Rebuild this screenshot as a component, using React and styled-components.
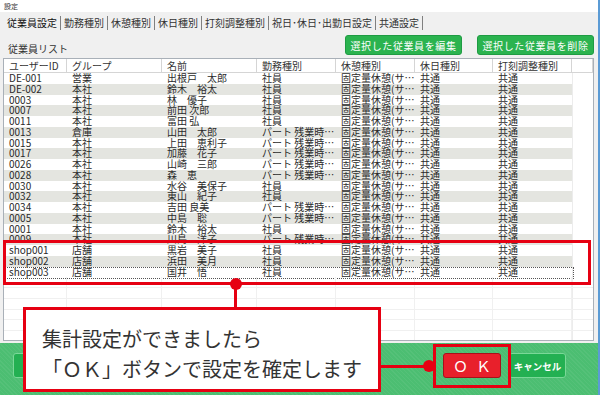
import styled, { createGlobalStyle } from "styled-components";

const GlobalStyle = createGlobalStyle`
  * { box-sizing: border-box; }
  body {
    margin: 0;
    font-family: "Noto Sans CJK JP", "Noto Sans", sans-serif;
    color: #222;
  }
`;

const RED = "#e60012";
const COLS = "63px 95px 95px 79px 79px 78px 79px 1fr";

const Window = styled.div`
  position: relative;
  width: 600px;
  height: 395px;
  display: flex;
  flex-direction: column;
  background: #f0f0f0;
  border-right: 2px solid #5b9bd5;
  overflow: hidden;
`;

const TitleBar = styled.div`
  height: 12px;
  background: #fff;
  padding-left: 4px;
  font-size: 7px;
  line-height: 12px;
  color: #333;
`;

const TabBar = styled.div`
  height: 19px;
  display: flex;
  align-items: center;
  padding-left: 4px;
`;

const Tab = styled.div`
  height: 14px;
  padding: 0 3px;
  margin-top: 3px;
  font-size: 10px;
  line-height: 13px;
  white-space: nowrap;
  border-right: 1px solid #808080;
  color: ${(p) => (p.$active ? "#111" : "#333")};
`;

const Body = styled.div`
  flex: 1;
  display: flex;
  flex-direction: column;
  padding: 0 4px 2px 3px;
  min-height: 0;
`;

const Toolbar = styled.div`
  height: 27px;
  display: flex;
  align-items: flex-end;
  padding: 0 0 3px 5px;
  gap: 15px;
`;

const ListLabel = styled.div`
  flex: 1;
  font-size: 10px;
  line-height: 12px;
  color: #333;
`;

const GreenButton = styled.button`
  height: 20px;
  width: 117px;
  padding: 0;
  border: 1px solid #1f9b43;
  border-radius: 3px;
  background: #2bb34f;
  color: #fff;
  font-family: inherit;
  font-size: 10px;
  letter-spacing: 0.6px;
`;

const Table = styled.div`
  flex: 1;
  display: flex;
  flex-direction: column;
  background: #fff;
  border: 1px solid #a9b0b8;
  overflow: hidden;
`;

const HeaderRow = styled.div`
  display: grid;
  grid-template-columns: ${COLS};
  height: 14px;
  flex-shrink: 0;
  border-bottom: 1px solid #d5d5d5;
`;

const HeaderCell = styled.div`
  padding-left: 5px;
  font-size: 10px;
  line-height: 13px;
  color: #333;
  border-right: 1px solid #d5d5d5;
  white-space: nowrap;
  overflow-x: clip;
`;

const Row = styled.div`
  position: relative;
  display: grid;
  grid-template-columns: ${COLS};
  height: 10.75px;
  flex-shrink: 0;
  ${(p) => p.$empty && "border-bottom: 1px solid #f0f0f0;"}
  ${(p) =>
    p.$focus &&
    `&::after {
      content: "";
      position: absolute;
      left: 0;
      top: 0;
      width: 568px;
      height: 100%;
      border: 1px dotted #555;
    }`}
`;

const Cell = styled.div`
  padding-left: 5px;
  font-size: 10px;
  line-height: 10.75px;
  white-space: nowrap;
  overflow-x: clip;
  color: #2a2a2a;
  background: ${(p) => (p.$alt ? "#e4e5e0" : "transparent")};
  ${(p) => p.$empty && "border-right: 1px solid #f0f0f0;"}
`;

const FillCell = styled.div`
  border-left: 1px solid #ececec;
`;

const Footer = styled.div`
  height: 52px;
  display: flex;
  align-items: flex-start;
  justify-content: space-between;
  padding: 10px 32px 0 13px;
  background: repeating-linear-gradient(
      45deg,
      rgba(255, 255, 255, 0.05) 0 1px,
      transparent 1px 3px
    ),
    #4cbe72;
`;

const FooterGroup = styled.div`
  display: flex;
  gap: 8px;
`;

const FooterButton = styled.button`
  height: 25px;
  width: ${(p) => p.$w}px;
  padding: 0;
  border-radius: 3px;
  font-family: inherit;
  color: #fff;
  border: 1px solid ${(p) => (p.$ok ? "#a8101a" : "#7ad898")};
  background: ${(p) => (p.$ok ? "#e8202b" : "#23b052")};
  font-size: ${(p) => (p.$ok ? "15px" : "9.5px")};
  font-weight: ${(p) => (p.$ok ? 400 : 700)};
  letter-spacing: ${(p) => (p.$ok ? "8px" : "0")};
  text-indent: ${(p) => (p.$ok ? "8px" : "0")};
`;

const Highlight = styled.div`
  position: absolute;
  left: ${(p) => p.$x}px;
  top: ${(p) => p.$y}px;
  width: ${(p) => p.$w}px;
  height: ${(p) => p.$h}px;
  border: 3px solid ${RED};
  pointer-events: none;
`;

const Dot = styled.div`
  position: absolute;
  left: ${(p) => p.$x - 6}px;
  top: ${(p) => p.$y - 6}px;
  width: 12px;
  height: 12px;
  border-radius: 50%;
  background: ${RED};
`;

const Line = styled.div`
  position: absolute;
  left: ${(p) => p.$x}px;
  top: ${(p) => p.$y}px;
  width: ${(p) => p.$w}px;
  height: ${(p) => p.$h}px;
  background: ${RED};
`;

const Callout = styled.div`
  position: absolute;
  left: 23px;
  top: 307px;
  width: 358px;
  height: 85px;
  background: #fff;
  border: 3px solid ${RED};
  padding: 14px 0 0 16px;
  font-size: 20px;
  line-height: 30px;
  color: #333;
  white-space: nowrap;
`;

const tabs = ["従業員設定", "勤務種別", "休憩種別", "休日種別", "打刻調整種別", "祝日･休日･出勤日設定", "共通設定"];
const headers = ["ユーザーID", "グループ", "名前", "勤務種別", "休憩種別", "休日種別", "打刻調整種別", ""];

const PART = "パート 残業時…";
const employees = [
  ["DE-001", "営業", "出根戸　太郎", "社員"],
  ["DE-002", "本社", "鈴木　裕太", "社員"],
  ["0003", "本社", "林　優子", "社員"],
  ["0007", "本社", "前田 次郎", "社員"],
  ["0011", "本社", "富田 弘", "社員"],
  ["0013", "倉庫", "山田　太郎", PART],
  ["0015", "本社", "上田　恵利子", PART],
  ["0017", "本社", "加藤　花子", PART],
  ["0026", "本社", "山崎　三郎", PART],
  ["0028", "本社", "森　恵", PART],
  ["0030", "本社", "水谷　美保子", "社員"],
  ["0032", "本社", "東山　紀子", "社員"],
  ["0034", "本社", "吉田 良美", PART],
  ["0005", "本社", "中島　聡", PART],
  ["0001", "本社", "鈴木　裕太", "社員"],
  ["0009", "本社", "川島　洋子", PART],
  ["shop001", "店舗", "黒岩　美子", "社員"],
  ["shop002", "店舗", "浜田　美月", "社員"],
  ["shop003", "店舗", "国井　悟", "社員"],
];

export default function App() {
  return (
    <>
      <GlobalStyle />
      <Window>
        <TitleBar>設定</TitleBar>
        <TabBar>
          {tabs.map((t, i) => (
            <Tab key={t} $active={i === 0}>
              {t}
            </Tab>
          ))}
        </TabBar>
        <Body>
          <Toolbar>
            <ListLabel>従業員リスト</ListLabel>
            <GreenButton>選択した従業員を編集</GreenButton>
            <GreenButton>選択した従業員を削除</GreenButton>
          </Toolbar>
          <Table>
            <HeaderRow>
              {headers.map((h, i) => (
                <HeaderCell key={i}>{h}</HeaderCell>
              ))}
            </HeaderRow>
            {employees.map((e, i) => {
              const alt = i % 2 === 1;
              const cells = [...e, "固定量休憩(サ…", "共通", "共通"];
              return (
                <Row key={e[0]} $focus={i === employees.length - 1}>
                  {cells.map((c, j) => (
                    <Cell key={j} $alt={alt}>
                      {c}
                    </Cell>
                  ))}
                  <FillCell />
                </Row>
              );
            })}
            {Array.from({ length: 7 }).map((_, i) => (
              <Row key={"e" + i} $empty>
                {Array.from({ length: 7 }).map((__, j) => (
                  <Cell key={j} $empty />
                ))}
                <FillCell />
              </Row>
            ))}
          </Table>
        </Body>
        <Footer>
          {/* left button sits under the callout, its label is hidden */}
          <FooterButton $w={70} aria-label="戻る" />
          <FooterGroup>
            <FooterButton $ok $w={58}>
              ＯＫ
            </FooterButton>
            <FooterButton $w={57}>キャンセル</FooterButton>
          </FooterGroup>
        </Footer>

        <Highlight $x={3} $y={240} $w={588} $h={45} />
        <Line $x={234} $y={284} $w={3} $h={24} />
        <Dot $x={236} $y={284} />
        <Callout>
          集計設定ができましたら
          <br />
          「ＯＫ」ボタンで設定を確定します
        </Callout>
        <Line $x={381} $y={365} $w={48} $h={3} />
        <Dot $x={429} $y={366} />
        <Highlight $x={433} $y={344} $w={78} $h={44} />
      </Window>
    </>
  );
}
